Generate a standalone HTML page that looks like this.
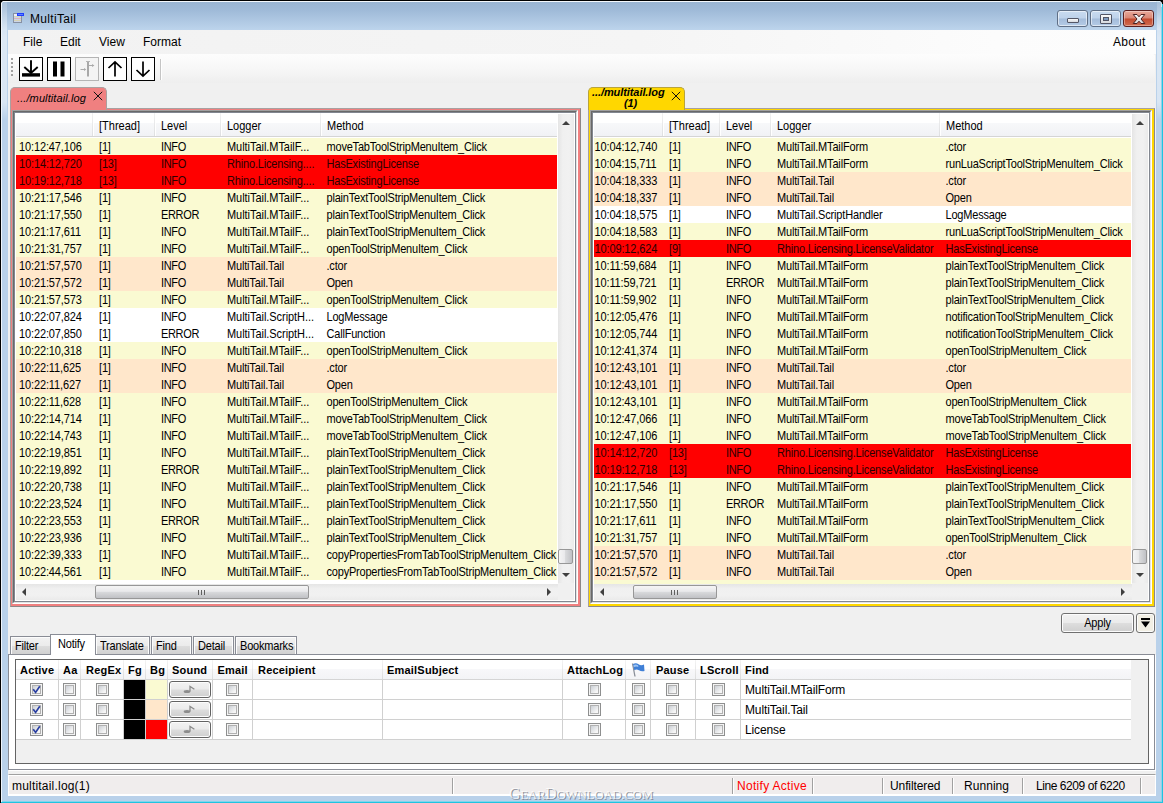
<!DOCTYPE html>
<html><head><meta charset="utf-8"><title>MultiTail</title>
<style>
*{box-sizing:border-box;margin:0;padding:0}
html,body{width:1163px;height:803px;overflow:hidden;background:#b9d1ea}
body{font-family:"Liberation Sans",sans-serif;font-size:11px;color:#000}
#win{position:relative;width:1163px;height:803px;overflow:hidden;background:#b9d1ea}
#win div,#win span,#win i,#win b,#win u{position:absolute}
/* frame */
#frame{left:0;top:0;width:1163px;height:803px;background:linear-gradient(#99b4d1 0,#9fbad8 10px,#bdd4ec 30px,#b9d1ea 31px)}
#fl{left:0;top:0;width:1px;height:803px;background:#000}
#fl2{left:1px;top:2px;width:1px;height:801px;background:#eef4fb}
#ft{left:0;top:0;width:1163px;height:1px;background:#000}
#ft2{left:2px;top:1px;width:1158px;height:1px;background:#f4f8fc}
#fr{left:1162px;top:4px;width:1px;height:799px;background:#1fc3e0}
#fr2{left:1161px;top:3px;width:1px;height:800px;background:#8fd3ea}
#fb{left:1px;top:802px;width:1162px;height:1px;background:#1fc3e0}
#fb2{left:2px;top:801px;width:1160px;height:1px;background:#7fd6ec}
#title{left:30px;top:12px;font-size:12px;line-height:15px;letter-spacing:.32px;white-space:nowrap}
/* client */
#client{left:8px;top:30px;width:1148px;height:766px;background:#f0f0f0}
#menu{left:0;top:0;width:1148px;height:24px;background:linear-gradient(to right,#f2f2f2 0,#f5f5f5 55%,#fcfcfc 86%,#fdfdfd 100%)}
#menu span{top:5px;font-size:12px;line-height:15px;white-space:nowrap}
#tool{left:0;top:24px;width:1147px;height:29px;background:linear-gradient(#fdfdfd,#f7f7f7 50%,#eeeeee);border-radius:0 2px 2px 0}
.tb{top:3px;width:24px;height:24px;border:1px solid #000;background:#fff}
.tb.dis{border-color:#b4b4b4;background:#f4f4f4}
.tb svg{position:absolute;left:0;top:0}
#grip{left:3px;top:4px;width:2px;height:20px;background:repeating-linear-gradient(#a0a0a0 0,#a0a0a0 2px,transparent 2px,transparent 4px)}
#tsep{left:152px;top:5px;width:1px;height:21px;background:#c5c5c5;box-shadow:1px 0 0 #fff}
/* file tabs */
.ftab{top:87px;height:23px;z-index:4;border:1px solid #a9a0a0;border-bottom:none;border-radius:5px 5px 0 0;font-style:italic;white-space:nowrap}
.ftab span{white-space:nowrap}
/* panes */
.pane{top:108px;height:499px;border-top:1px solid #a8a0a0;border-left:1px solid #a5a0a0;border-right:1px solid #8c8888;border-bottom:1px solid #8c8888}
.lv{left:1px;top:1px;right:2px;bottom:2px;background:#fff;border:1px solid #a0a0a0;border-right-color:#fff;border-bottom-color:#fff;overflow:hidden}
.lv:before{content:"";position:absolute;left:0;top:0;right:0;bottom:0;border:1px solid #696969;border-right-color:#e3e3e3;border-bottom-color:#e3e3e3;z-index:5;pointer-events:none}
.lv:after{content:"";position:absolute;left:1px;top:1px;right:1px;bottom:1px;border:1px solid #828790;z-index:5;pointer-events:none}
.lvh{left:3px;top:2px;right:20px;height:24px;background:linear-gradient(#fff 0,#fff 42%,#f7f8fa 43%,#f1f2f5 100%);border-bottom:1px solid #d5d5d5}
.lvh .ht{top:7px;line-height:13px;white-space:nowrap}
.lvh .hs{top:0;width:1px;height:23px;background:linear-gradient(#f2f2f2,#dedfe1);box-shadow:1px 0 0 #fff}
.r{left:3px;right:20px;height:17px}
.r span{top:3px;line-height:13px;white-space:nowrap;letter-spacing:-.17px}
.r span:nth-child(1){letter-spacing:-.12px}
.r span:nth-child(3){letter-spacing:-.35px}
.r span:nth-child(5){letter-spacing:-.2px;margin-left:-.5px}
.r.red{color:#2c0000}
.tail{left:3px;right:20px;top:469px;height:4px}
.vsb{right:3px;top:3px;width:16px;bottom:20px;background:linear-gradient(to right,#e5e5e5,#f0f0f0 30%,#f1f1f1 70%,#eaeaea)}
.hsb{left:3px;right:19px;bottom:3px;height:16px;background:linear-gradient(#e5e5e5,#f0f0f0 30%,#f1f1f1 70%,#eaeaea)}
.corner{right:3px;bottom:3px;width:16px;height:17px;background:#f0f0f0}
.au{left:4px;top:7px;border:4px solid transparent;border-top:none;border-bottom:4px solid #404040;width:0;height:0}
.ad{left:4px;bottom:6px;border:4px solid transparent;border-bottom:none;border-top:4px solid #404040;width:0;height:0}
.al{left:6px;top:4px;border:4px solid transparent;border-left:none;border-right:4px solid #404040;width:0;height:0}
.ar{right:7px;top:4px;border:4px solid transparent;border-right:none;border-left:4px solid #404040;width:0;height:0}
.vth{left:0;width:15px;top:435px;height:15px;border:1px solid #979797;border-radius:2px;background:linear-gradient(to right,#f5f5f5,#e9e9eb 45%,#d9dadc 50%,#c0c1c5)}
.hth{top:1px;height:14px;border:1px solid #979797;border-radius:2px;background:linear-gradient(#f5f5f5,#e9e9eb 45%,#d9dadc 50%,#c0c1c5)}
.hth u{left:50%;top:4px;margin-left:-4px;width:7px;height:5px;background:repeating-linear-gradient(to right,#606060 0,#606060 1px,transparent 1px,transparent 3px)}
/* apply */
.btn{border:1px solid #707070;border-radius:3px;background:linear-gradient(#f2f2f2,#ebebeb 48%,#dddddd 52%,#cfcfcf);box-shadow:inset 0 0 0 1px #fcfcfc;text-align:center}
/* bottom tabs */
.btab{top:636px;height:19px;border:1px solid #898c95;border-bottom:none;background:linear-gradient(#f2f2f2,#ebebeb 50%,#dddddd 50%,#cfcfcf);box-shadow:inset 1px 1px 0 #fcfcfc,inset -1px 0 0 #fcfcfc;line-height:13px;padding-top:3px;padding-left:4px;white-space:nowrap}
.btab.sel{top:634px;height:21px;background:#fff;z-index:3;padding-top:3px;padding-left:7px;box-shadow:none}
#tabpage{left:8px;top:654px;width:1147px;height:116px;border:1px solid #898c95;background:#fff;box-shadow:1px 1px 0 #fff}
#gridbox{left:6px;top:4px;width:1134px;height:105px;border:1px solid #646464;background:#f0f0f0}
#ghead{left:0;top:0;width:1115px;height:20px;background:linear-gradient(#fff 0,#fff 45%,#f8f8fa 46%,#f3f4f6 100%);border-bottom:1px solid #d5d5d5}
#ghead span{top:4px;font-weight:bold;line-height:13px;white-space:nowrap;letter-spacing:.2px}
#ghead i{top:0;width:1px;height:19px;background:linear-gradient(#f4f4f4,#dcdcdc)}
.grow{left:0;width:1115px;height:20px;background:#fff;border-bottom:1px solid #d0d0d0}
.grow i{top:0;width:1px;height:20px;background:#d0d0d0}
.grow span{top:4px;line-height:13px;white-space:nowrap;letter-spacing:-.13px}
.cb{top:3px;width:13px;height:13px;border:1px solid #8e8f8f;background:#f4f4f4}
.cb:before{content:"";position:absolute;left:1px;top:1px;width:7px;height:7px;border:1px solid #b1b1b1;background:linear-gradient(135deg,#cbcfd5,#f6f6f6 80%)}
.cb svg{position:absolute;left:1px;top:1px}
.snd{top:1px;left:153px;width:42px;height:17px;border-color:#626262;border-radius:3px}
/* status */
#status{left:8px;top:774px;width:1148px;height:22px;background:#f0eded;border-top:1px solid #a0a0a0;border-right:1px solid #fff;border-bottom:2px solid #fff;border-left:1px solid #fff}
#status:before{content:"";position:absolute;left:0;top:0;right:0;height:1px;background:#fff}
#status span{top:4px;font-size:12px;line-height:15px;white-space:nowrap}
#status i{top:3px;width:1px;height:16px;background:#a0a0a0;box-shadow:1px 0 0 #fff}
.cap{border:1px solid #5f6f86;border-radius:3px;background:linear-gradient(#c9dbf0 0,#bed2ea 48%,#a4bcda 52%,#b4cbe6 100%);box-shadow:inset 0 0 0 1px rgba(255,255,255,.55)}
.cap.close{border-color:#5b1f1f;background:linear-gradient(#e9a99b 0,#d98674 48%,#c34a2f 52%,#d06c4f 100%);box-shadow:inset 0 0 0 1px rgba(255,255,255,.35)}
#wm{left:509px;top:785px;font-family:"Liberation Serif",serif;font-size:16px;line-height:18px;color:rgba(255,255,255,.8);text-shadow:1px 1px 0 rgba(110,115,125,.75);letter-spacing:-.33px;white-space:nowrap;z-index:9}

#gl{left:2px;top:2px;width:5px;height:118px;background:linear-gradient(rgba(255,255,255,.15),rgba(255,255,255,.5) 30%,rgba(255,255,255,.45) 85%,rgba(255,255,255,0))}
#gr{left:1157px;top:2px;width:4px;height:118px;background:linear-gradient(rgba(255,255,255,.15),rgba(255,255,255,.5) 30%,rgba(255,255,255,.45) 85%,rgba(255,255,255,0))}
#wm s{font-size:13px;text-decoration:none}
.r span,.lvh .ht,.btab span,.btn>span{transform:scaleY(1.13);transform-origin:0 10.4px}
.btab span,.btn>span{position:static!important;display:inline-block;line-height:13px;letter-spacing:-.2px}

</style></head><body>
<div id="win">
<div id="frame"></div>
<div id="ft"></div><div id="ft2"></div><div id="fl"></div><div id="fl2"></div><div id="fr2"></div><div id="fr"></div><div id="fb2"></div><div id="fb"></div><div id="gl"></div><div id="gr"></div>
<svg style="position:absolute;left:0;top:0" width="8" height="8" viewBox="0 0 8 8"><path d="M0 0H7V1H3V2H2V3H1V7H0Z" fill="#000"/><path d="M1.5 7V3.5Q1.5 1.5 3.5 1.5H7" fill="none" stroke="#f4f8fc" stroke-width="1"/></svg>
<svg style="position:absolute;left:1155px;top:0" width="8" height="8" viewBox="0 0 8 8"><path d="M8 0H1V1H5V2H6V3H7V4H8Z" fill="#000"/><path d="M6.5 7V3.5Q6.5 1.5 4.5 1.5H1" fill="none" stroke="#d9eef7" stroke-width="1"/></svg>
<!-- app icon -->
<svg style="position:absolute;left:13px;top:13px" width="12" height="10" viewBox="0 0 12 10"><rect x=".5" y=".5" width="8" height="9" fill="#ccd5e6" stroke="#8791a2"/><rect x="1" y="1" width="3" height="2" fill="#e8ecfa"/><rect x="4" y="0" width="7" height="3" fill="#1f3fff"/><rect x="5" y="1" width="5" height="1" fill="#5f7dff"/><rect x="1" y="3" width="7" height="1" fill="#d6d6bc"/><rect x="1" y="5" width="7" height="1" fill="#dcb4bc"/><rect x="1" y="7" width="7" height="1" fill="#d6d2b4"/></svg>
<span id="title">MultiTail</span>
<!-- caption buttons -->
<div class="cap" style="left:1057px;top:10px;width:31px;height:17px"><i style="left:9px;top:7px;width:12px;height:5px;border:1px solid #535666;background:linear-gradient(#fbfbfb,#d6d9de);border-radius:1px"></i></div>
<div class="cap" style="left:1090px;top:10px;width:31px;height:17px"><i style="left:9px;top:3px;width:12px;height:10px;border:1px solid #535666;background:linear-gradient(#fbfbfb,#d6d9de);border-radius:1px"></i><i style="left:12px;top:6px;width:6px;height:4px;border:1px solid #535666;background:#7f9bc0"></i></div>
<div class="cap close" style="left:1123px;top:10px;width:31px;height:17px"><svg style="position:absolute;left:8px;top:2px" width="14" height="12" viewBox="0 0 14 12"><path d="M1.2 1.5L5 1.5L7 3.8L9 1.5L12.8 1.5L9 6L12.8 10.5L9 10.5L7 8.2L5 10.5L1.2 10.5L5 6Z" fill="url(#xg)" stroke="#4a2020" stroke-width="1" stroke-linejoin="round"/><defs><linearGradient id="xg" x1="0" y1="0" x2="0" y2="1"><stop offset="0" stop-color="#fdfdfd"/><stop offset="1" stop-color="#d4d4d8"/></linearGradient></defs></svg></div>
<div id="client">
 <div id="menu">
  <span style="left:15px">File</span><span style="left:52px">Edit</span><span style="left:91px">View</span><span style="left:135px">Format</span><span style="left:1105px;letter-spacing:.25px">About</span>
 </div>
 <div id="tool">
  <div id="grip"></div>
  <div class="tb" style="left:11px"><svg width="22" height="22" viewBox="0 0 22 22"><path d="M11 2.2V14.5M4.3 9L11 15L17.7 9" fill="none" stroke="#000" stroke-width="1.9"/><rect x="2" y="15.2" width="18" height="3.4" fill="#000"/></svg></div>
  <div class="tb" style="left:39px"><svg width="22" height="22" viewBox="0 0 22 22"><rect x="5" y="3.5" width="4" height="15" fill="#000"/><rect x="12.5" y="3.5" width="4" height="15" fill="#000"/></svg></div>
  <div class="tb dis" style="left:67px"><svg width="22" height="22" viewBox="0 0 22 22"><path d="M12 3V18.5" stroke="#9a9a9a" stroke-width="1.7" fill="none"/><path d="M10 3.5H14" stroke="#b5b5b5" stroke-width="1" fill="none"/><path d="M4.5 11.5H9M13 7.5H17.5" stroke="#aaa" stroke-width="1" fill="none"/><path d="M8 10L10.3 11.5L8 13ZM16 6L18.4 7.5L16 9Z" fill="#aaa"/></svg></div>
  <div class="tb" style="left:95px"><svg width="22" height="22" viewBox="0 0 22 22"><path d="M11 18.5V4M4.5 10L11 3.8L17.5 10" fill="none" stroke="#000" stroke-width="1.7"/></svg></div>
  <div class="tb" style="left:123px"><svg width="22" height="22" viewBox="0 0 22 22"><path d="M11 3.5V18M4.5 12L11 18.2L17.5 12" fill="none" stroke="#000" stroke-width="1.7"/></svg></div>
  <div id="tsep"></div>
 </div>
</div>
<!-- file tabs -->
<div class="ftab" style="left:10px;width:97px;background:#f08080"><span style="left:6px;top:4px;line-height:13px;letter-spacing:.1px">.../multitail.log</span>
 <svg style="position:absolute;left:82px;top:3px" width="10" height="10" viewBox="0 0 10 10"><path d="M.8.8L9.2 9.2M9.2.8L.8 9.2" stroke="#111" stroke-width="1" fill="none"/></svg></div>
<div class="ftab" style="left:588px;width:97px;background:#ffd700;font-weight:bold;border-color:#b9a43a"><span style="left:3px;top:-1px;line-height:11px;letter-spacing:-.08px;font-size:11px">.../multitail.log</span><span style="left:35px;top:10px;line-height:11px;letter-spacing:-.1px">(1)</span>
 <svg style="position:absolute;left:82px;top:3px" width="10" height="10" viewBox="0 0 10 10"><path d="M.8.8L9.2 9.2M9.2.8L.8 9.2" stroke="#111" stroke-width="1" fill="none"/></svg></div>

<div class="pane pl" style="left:10px;width:571px;background:#f08080">
<div class="lv">
<div class="lvh">
<i class="hs" style="left:76px"></i>
<span class="ht" style="left:83px">[Thread]</span>
<i class="hs" style="left:138px"></i>
<span class="ht" style="left:145px">Level</span>
<i class="hs" style="left:204px"></i>
<span class="ht" style="left:211px">Logger</span>
<i class="hs" style="left:304px"></i>
<span class="ht" style="left:311px">Method</span>
</div>
<div class="r" style="top:27px;background:#fafad2"><span style="left:3px">10:12:47,106</span><span style="left:83px">[1]</span><span style="left:145px">INFO</span><span style="left:211px;letter-spacing:-.05px">MultiTail.MTailF...</span><span style="left:311px">moveTabToolStripMenuItem_Click</span></div>
<div class="r red" style="top:44px;background:#ff0000"><span style="left:3px">10:14:12,720</span><span style="left:83px">[13]</span><span style="left:145px">INFO</span><span style="left:211px">Rhino.Licensing....</span><span style="left:311px">HasExistingLicense</span></div>
<div class="r red" style="top:61px;background:#ff0000"><span style="left:3px">10:19:12,718</span><span style="left:83px">[13]</span><span style="left:145px">INFO</span><span style="left:211px">Rhino.Licensing....</span><span style="left:311px">HasExistingLicense</span></div>
<div class="r" style="top:78px;background:#fafad2"><span style="left:3px">10:21:17,546</span><span style="left:83px">[1]</span><span style="left:145px">INFO</span><span style="left:211px;letter-spacing:-.05px">MultiTail.MTailF...</span><span style="left:311px">plainTextToolStripMenuItem_Click</span></div>
<div class="r" style="top:95px;background:#fafad2"><span style="left:3px">10:21:17,550</span><span style="left:83px">[1]</span><span style="left:145px">ERROR</span><span style="left:211px;letter-spacing:-.05px">MultiTail.MTailF...</span><span style="left:311px">plainTextToolStripMenuItem_Click</span></div>
<div class="r" style="top:112px;background:#fafad2"><span style="left:3px">10:21:17,611</span><span style="left:83px">[1]</span><span style="left:145px">INFO</span><span style="left:211px;letter-spacing:-.05px">MultiTail.MTailF...</span><span style="left:311px">plainTextToolStripMenuItem_Click</span></div>
<div class="r" style="top:129px;background:#fafad2"><span style="left:3px">10:21:31,757</span><span style="left:83px">[1]</span><span style="left:145px">INFO</span><span style="left:211px;letter-spacing:-.05px">MultiTail.MTailF...</span><span style="left:311px">openToolStripMenuItem_Click</span></div>
<div class="r" style="top:146px;background:#ffe7cb"><span style="left:3px">10:21:57,570</span><span style="left:83px">[1]</span><span style="left:145px">INFO</span><span style="left:211px">MultiTail.Tail</span><span style="left:311px">.ctor</span></div>
<div class="r" style="top:163px;background:#ffe7cb"><span style="left:3px">10:21:57,572</span><span style="left:83px">[1]</span><span style="left:145px">INFO</span><span style="left:211px">MultiTail.Tail</span><span style="left:311px">Open</span></div>
<div class="r" style="top:180px;background:#fafad2"><span style="left:3px">10:21:57,573</span><span style="left:83px">[1]</span><span style="left:145px">INFO</span><span style="left:211px;letter-spacing:-.05px">MultiTail.MTailF...</span><span style="left:311px">openToolStripMenuItem_Click</span></div>
<div class="r" style="top:197px;background:#ffffff"><span style="left:3px">10:22:07,824</span><span style="left:83px">[1]</span><span style="left:145px">INFO</span><span style="left:211px;letter-spacing:-.05px">MultiTail.ScriptH...</span><span style="left:311px">LogMessage</span></div>
<div class="r" style="top:214px;background:#ffffff"><span style="left:3px">10:22:07,850</span><span style="left:83px">[1]</span><span style="left:145px">ERROR</span><span style="left:211px;letter-spacing:-.05px">MultiTail.ScriptH...</span><span style="left:311px">CallFunction</span></div>
<div class="r" style="top:231px;background:#fafad2"><span style="left:3px">10:22:10,318</span><span style="left:83px">[1]</span><span style="left:145px">INFO</span><span style="left:211px;letter-spacing:-.05px">MultiTail.MTailF...</span><span style="left:311px">openToolStripMenuItem_Click</span></div>
<div class="r" style="top:248px;background:#ffe7cb"><span style="left:3px">10:22:11,625</span><span style="left:83px">[1]</span><span style="left:145px">INFO</span><span style="left:211px">MultiTail.Tail</span><span style="left:311px">.ctor</span></div>
<div class="r" style="top:265px;background:#ffe7cb"><span style="left:3px">10:22:11,627</span><span style="left:83px">[1]</span><span style="left:145px">INFO</span><span style="left:211px">MultiTail.Tail</span><span style="left:311px">Open</span></div>
<div class="r" style="top:282px;background:#fafad2"><span style="left:3px">10:22:11,628</span><span style="left:83px">[1]</span><span style="left:145px">INFO</span><span style="left:211px;letter-spacing:-.05px">MultiTail.MTailF...</span><span style="left:311px">openToolStripMenuItem_Click</span></div>
<div class="r" style="top:299px;background:#fafad2"><span style="left:3px">10:22:14,714</span><span style="left:83px">[1]</span><span style="left:145px">INFO</span><span style="left:211px;letter-spacing:-.05px">MultiTail.MTailF...</span><span style="left:311px">moveTabToolStripMenuItem_Click</span></div>
<div class="r" style="top:316px;background:#fafad2"><span style="left:3px">10:22:14,743</span><span style="left:83px">[1]</span><span style="left:145px">INFO</span><span style="left:211px;letter-spacing:-.05px">MultiTail.MTailF...</span><span style="left:311px">moveTabToolStripMenuItem_Click</span></div>
<div class="r" style="top:333px;background:#fafad2"><span style="left:3px">10:22:19,851</span><span style="left:83px">[1]</span><span style="left:145px">INFO</span><span style="left:211px;letter-spacing:-.05px">MultiTail.MTailF...</span><span style="left:311px">plainTextToolStripMenuItem_Click</span></div>
<div class="r" style="top:350px;background:#fafad2"><span style="left:3px">10:22:19,892</span><span style="left:83px">[1]</span><span style="left:145px">ERROR</span><span style="left:211px;letter-spacing:-.05px">MultiTail.MTailF...</span><span style="left:311px">plainTextToolStripMenuItem_Click</span></div>
<div class="r" style="top:367px;background:#fafad2"><span style="left:3px">10:22:20,738</span><span style="left:83px">[1]</span><span style="left:145px">INFO</span><span style="left:211px;letter-spacing:-.05px">MultiTail.MTailF...</span><span style="left:311px">plainTextToolStripMenuItem_Click</span></div>
<div class="r" style="top:384px;background:#fafad2"><span style="left:3px">10:22:23,524</span><span style="left:83px">[1]</span><span style="left:145px">INFO</span><span style="left:211px;letter-spacing:-.05px">MultiTail.MTailF...</span><span style="left:311px">plainTextToolStripMenuItem_Click</span></div>
<div class="r" style="top:401px;background:#fafad2"><span style="left:3px">10:22:23,553</span><span style="left:83px">[1]</span><span style="left:145px">ERROR</span><span style="left:211px;letter-spacing:-.05px">MultiTail.MTailF...</span><span style="left:311px">plainTextToolStripMenuItem_Click</span></div>
<div class="r" style="top:418px;background:#fafad2"><span style="left:3px">10:22:23,936</span><span style="left:83px">[1]</span><span style="left:145px">INFO</span><span style="left:211px;letter-spacing:-.05px">MultiTail.MTailF...</span><span style="left:311px">plainTextToolStripMenuItem_Click</span></div>
<div class="r" style="top:435px;background:#fafad2"><span style="left:3px">10:22:39,333</span><span style="left:83px">[1]</span><span style="left:145px">INFO</span><span style="left:211px;letter-spacing:-.05px">MultiTail.MTailF...</span><span style="left:311px">copyPropertiesFromTabToolStripMenuItem_Click</span></div>
<div class="r" style="top:452px;background:#fafad2"><span style="left:3px">10:22:44,561</span><span style="left:83px">[1]</span><span style="left:145px">INFO</span><span style="left:211px;letter-spacing:-.05px">MultiTail.MTailF...</span><span style="left:311px">copyPropertiesFromTabToolStripMenuItem_Click</span></div>
<div class="tail" style="background:#ffffff"></div>
<div class="vsb"><b class="au"></b><div class="vth"></div><b class="ad"></b></div>
<div class="hsb"><b class="al"></b><div class="hth" style="left:79px;width:214px"><u></u></div><b class="ar"></b></div>
<div class="corner"></div>
</div></div>
<div class="pane pr" style="left:588px;width:567px;background:#ffd700">
<div class="lv">
<div class="lvh">
<i class="hs" style="left:68px"></i>
<span class="ht" style="left:75px">[Thread]</span>
<i class="hs" style="left:125px"></i>
<span class="ht" style="left:132px">Level</span>
<i class="hs" style="left:176px"></i>
<span class="ht" style="left:183px">Logger</span>
<i class="hs" style="left:345px"></i>
<span class="ht" style="left:352px">Method</span>
</div>
<div class="r" style="top:27px;background:#fafad2"><span style="left:0.5px">10:04:12,740</span><span style="left:75px">[1]</span><span style="left:132px">INFO</span><span style="left:183px">MultiTail.MTailForm</span><span style="left:352px">.ctor</span></div>
<div class="r" style="top:44px;background:#fafad2"><span style="left:0.5px">10:04:15,711</span><span style="left:75px">[1]</span><span style="left:132px">INFO</span><span style="left:183px">MultiTail.MTailForm</span><span style="left:352px">runLuaScriptToolStripMenuItem_Click</span></div>
<div class="r" style="top:61px;background:#ffe7cb"><span style="left:0.5px">10:04:18,333</span><span style="left:75px">[1]</span><span style="left:132px">INFO</span><span style="left:183px">MultiTail.Tail</span><span style="left:352px">.ctor</span></div>
<div class="r" style="top:78px;background:#ffe7cb"><span style="left:0.5px">10:04:18,337</span><span style="left:75px">[1]</span><span style="left:132px">INFO</span><span style="left:183px">MultiTail.Tail</span><span style="left:352px">Open</span></div>
<div class="r" style="top:95px;background:#ffffff"><span style="left:0.5px">10:04:18,575</span><span style="left:75px">[1]</span><span style="left:132px">INFO</span><span style="left:183px">MultiTail.ScriptHandler</span><span style="left:352px">LogMessage</span></div>
<div class="r" style="top:112px;background:#fafad2"><span style="left:0.5px">10:04:18,583</span><span style="left:75px">[1]</span><span style="left:132px">INFO</span><span style="left:183px">MultiTail.MTailForm</span><span style="left:352px">runLuaScriptToolStripMenuItem_Click</span></div>
<div class="r red" style="top:129px;background:#ff0000"><span style="left:0.5px">10:09:12,624</span><span style="left:75px">[9]</span><span style="left:132px">INFO</span><span style="left:183px">Rhino.Licensing.LicenseValidator</span><span style="left:352px">HasExistingLicense</span></div>
<div class="r" style="top:146px;background:#fafad2"><span style="left:0.5px">10:11:59,684</span><span style="left:75px">[1]</span><span style="left:132px">INFO</span><span style="left:183px">MultiTail.MTailForm</span><span style="left:352px">plainTextToolStripMenuItem_Click</span></div>
<div class="r" style="top:163px;background:#fafad2"><span style="left:0.5px">10:11:59,721</span><span style="left:75px">[1]</span><span style="left:132px">ERROR</span><span style="left:183px">MultiTail.MTailForm</span><span style="left:352px">plainTextToolStripMenuItem_Click</span></div>
<div class="r" style="top:180px;background:#fafad2"><span style="left:0.5px">10:11:59,902</span><span style="left:75px">[1]</span><span style="left:132px">INFO</span><span style="left:183px">MultiTail.MTailForm</span><span style="left:352px">plainTextToolStripMenuItem_Click</span></div>
<div class="r" style="top:197px;background:#fafad2"><span style="left:0.5px">10:12:05,476</span><span style="left:75px">[1]</span><span style="left:132px">INFO</span><span style="left:183px">MultiTail.MTailForm</span><span style="left:352px">notificationToolStripMenuItem_Click</span></div>
<div class="r" style="top:214px;background:#fafad2"><span style="left:0.5px">10:12:05,744</span><span style="left:75px">[1]</span><span style="left:132px">INFO</span><span style="left:183px">MultiTail.MTailForm</span><span style="left:352px">notificationToolStripMenuItem_Click</span></div>
<div class="r" style="top:231px;background:#fafad2"><span style="left:0.5px">10:12:41,374</span><span style="left:75px">[1]</span><span style="left:132px">INFO</span><span style="left:183px">MultiTail.MTailForm</span><span style="left:352px">openToolStripMenuItem_Click</span></div>
<div class="r" style="top:248px;background:#ffe7cb"><span style="left:0.5px">10:12:43,101</span><span style="left:75px">[1]</span><span style="left:132px">INFO</span><span style="left:183px">MultiTail.Tail</span><span style="left:352px">.ctor</span></div>
<div class="r" style="top:265px;background:#ffe7cb"><span style="left:0.5px">10:12:43,101</span><span style="left:75px">[1]</span><span style="left:132px">INFO</span><span style="left:183px">MultiTail.Tail</span><span style="left:352px">Open</span></div>
<div class="r" style="top:282px;background:#fafad2"><span style="left:0.5px">10:12:43,101</span><span style="left:75px">[1]</span><span style="left:132px">INFO</span><span style="left:183px">MultiTail.MTailForm</span><span style="left:352px">openToolStripMenuItem_Click</span></div>
<div class="r" style="top:299px;background:#fafad2"><span style="left:0.5px">10:12:47,066</span><span style="left:75px">[1]</span><span style="left:132px">INFO</span><span style="left:183px">MultiTail.MTailForm</span><span style="left:352px">moveTabToolStripMenuItem_Click</span></div>
<div class="r" style="top:316px;background:#fafad2"><span style="left:0.5px">10:12:47,106</span><span style="left:75px">[1]</span><span style="left:132px">INFO</span><span style="left:183px">MultiTail.MTailForm</span><span style="left:352px">moveTabToolStripMenuItem_Click</span></div>
<div class="r red" style="top:333px;background:#ff0000"><span style="left:0.5px">10:14:12,720</span><span style="left:75px">[13]</span><span style="left:132px">INFO</span><span style="left:183px">Rhino.Licensing.LicenseValidator</span><span style="left:352px">HasExistingLicense</span></div>
<div class="r red" style="top:350px;background:#ff0000"><span style="left:0.5px">10:19:12,718</span><span style="left:75px">[13]</span><span style="left:132px">INFO</span><span style="left:183px">Rhino.Licensing.LicenseValidator</span><span style="left:352px">HasExistingLicense</span></div>
<div class="r" style="top:367px;background:#fafad2"><span style="left:0.5px">10:21:17,546</span><span style="left:75px">[1]</span><span style="left:132px">INFO</span><span style="left:183px">MultiTail.MTailForm</span><span style="left:352px">plainTextToolStripMenuItem_Click</span></div>
<div class="r" style="top:384px;background:#fafad2"><span style="left:0.5px">10:21:17,550</span><span style="left:75px">[1]</span><span style="left:132px">ERROR</span><span style="left:183px">MultiTail.MTailForm</span><span style="left:352px">plainTextToolStripMenuItem_Click</span></div>
<div class="r" style="top:401px;background:#fafad2"><span style="left:0.5px">10:21:17,611</span><span style="left:75px">[1]</span><span style="left:132px">INFO</span><span style="left:183px">MultiTail.MTailForm</span><span style="left:352px">plainTextToolStripMenuItem_Click</span></div>
<div class="r" style="top:418px;background:#fafad2"><span style="left:0.5px">10:21:31,757</span><span style="left:75px">[1]</span><span style="left:132px">INFO</span><span style="left:183px">MultiTail.MTailForm</span><span style="left:352px">openToolStripMenuItem_Click</span></div>
<div class="r" style="top:435px;background:#ffe7cb"><span style="left:0.5px">10:21:57,570</span><span style="left:75px">[1]</span><span style="left:132px">INFO</span><span style="left:183px">MultiTail.Tail</span><span style="left:352px">.ctor</span></div>
<div class="r" style="top:452px;background:#ffe7cb"><span style="left:0.5px">10:21:57,572</span><span style="left:75px">[1]</span><span style="left:132px">INFO</span><span style="left:183px">MultiTail.Tail</span><span style="left:352px">Open</span></div>
<div class="tail" style="background:#fafad2"></div>
<div class="vsb"><b class="au"></b><div class="vth"></div><b class="ad"></b></div>
<div class="hsb"><b class="al"></b><div class="hth" style="left:39px;width:84px"><u></u></div><b class="ar"></b></div>
<div class="corner"></div>
</div></div>
<div class="btn" style="left:1061px;top:613px;width:73px;height:20px;line-height:13px;padding-top:3px"><span>Apply</span></div>
<div class="btn" style="left:1136px;top:613px;width:19px;height:20px;background:#f2efe4"><svg style="position:absolute;left:3px;top:4px" width="11" height="11" viewBox="0 0 11 11"><rect x="1" y="0" width="9" height="2" fill="#000"/><path d="M1 3.5H10L5.5 9.5Z" fill="#000"/></svg></div>
<div class="btab" style="left:10px;width:42px"><span>Filter</span></div>
<div class="btab" style="left:95px;width:55px"><span>Translate</span></div>
<div class="btab" style="left:151px;width:41px"><span>Find</span></div>
<div class="btab" style="left:193px;width:41px"><span>Detail</span></div>
<div class="btab" style="left:235px;width:62px"><span>Bookmarks</span></div>
<div class="btab sel" style="left:50px;width:46px"><span>Notify</span></div>
<div id="tabpage"><div id="gridbox">
<div id="ghead">
<span style="left:4px">Active</span>
<span style="left:47px">Aa</span>
<span style="left:70px">RegEx</span>
<span style="left:112px">Fg</span>
<span style="left:134px">Bg</span>
<span style="left:156px">Sound</span>
<span style="left:201.5px">Email</span>
<span style="left:242px">Receipient</span>
<span style="left:371px">EmailSubject</span>
<span style="left:551px">AttachLog</span>
<span style="left:640px">Pause</span>
<span style="left:684px">LScroll</span>
<span style="left:729px">Find</span>
<i style="left:42px"></i>
<i style="left:64px"></i>
<i style="left:107px"></i>
<i style="left:129px"></i>
<i style="left:151px"></i>
<i style="left:196px"></i>
<i style="left:236px"></i>
<i style="left:366px"></i>
<i style="left:546px"></i>
<i style="left:609px"></i>
<i style="left:634px"></i>
<i style="left:679px"></i>
<i style="left:724px"></i>
<svg style="position:absolute;left:614px;top:2px" width="16" height="16" viewBox="0 0 16 16"><path d="M2.5 1.5L5 14.5" stroke="#8a8f98" stroke-width="1.3" fill="none"/><path d="M3 2Q6 .5 8.5 2.2T14 2.5L14.5 9Q11.5 10 9 8.3T4.3 8.3Z" fill="#3f7fd6"/><path d="M3.6 3Q6 2 8 3.2L8.4 5Q6.5 4 4 5Z" fill="#9cc3f2"/></svg>
</div>
<div class="grow" style="top:20px">
<i style="left:42px"></i>
<i style="left:64px"></i>
<i style="left:107px"></i>
<i style="left:129px"></i>
<i style="left:151px"></i>
<i style="left:196px"></i>
<i style="left:236px"></i>
<i style="left:366px"></i>
<i style="left:546px"></i>
<i style="left:609px"></i>
<i style="left:634px"></i>
<i style="left:679px"></i>
<i style="left:724px"></i>
<div style="left:108px;top:0;width:21px;height:19px;background:#000"></div>
<div style="left:130px;top:0;width:21px;height:19px;background:#fafad2"></div>
<div class="btn snd"><svg style="position:absolute;left:13px;top:2px" width="16" height="11" viewBox="0 0 16 11"><ellipse cx="4" cy="7.6" rx="3.3" ry="1.5" fill="#8c8c8c"/><path d="M7 7.6V2.4L11.4 5.2" fill="none" stroke="#8c8c8c" stroke-width="1.3"/></svg></div>
<div class="cb" style="left:14px"><svg width="9" height="9" viewBox="0 0 9 9"><path d="M1.2 4.2L3.6 7.4L7.8 1.2" fill="none" stroke="#2a3fa0" stroke-width="1.7"/></svg></div>
<div class="cb" style="left:47px"></div>
<div class="cb" style="left:80px"></div>
<div class="cb" style="left:210px"></div>
<div class="cb" style="left:572px"></div>
<div class="cb" style="left:616px"></div>
<div class="cb" style="left:650px"></div>
<div class="cb" style="left:696px"></div>
<span style="left:729px;font-size:12px">MultiTail.MTailForm</span>
</div>
<div class="grow" style="top:40px">
<i style="left:42px"></i>
<i style="left:64px"></i>
<i style="left:107px"></i>
<i style="left:129px"></i>
<i style="left:151px"></i>
<i style="left:196px"></i>
<i style="left:236px"></i>
<i style="left:366px"></i>
<i style="left:546px"></i>
<i style="left:609px"></i>
<i style="left:634px"></i>
<i style="left:679px"></i>
<i style="left:724px"></i>
<div style="left:108px;top:0;width:21px;height:19px;background:#000"></div>
<div style="left:130px;top:0;width:21px;height:19px;background:#ffe7cb"></div>
<div class="btn snd"><svg style="position:absolute;left:13px;top:2px" width="16" height="11" viewBox="0 0 16 11"><ellipse cx="4" cy="7.6" rx="3.3" ry="1.5" fill="#8c8c8c"/><path d="M7 7.6V2.4L11.4 5.2" fill="none" stroke="#8c8c8c" stroke-width="1.3"/></svg></div>
<div class="cb" style="left:14px"><svg width="9" height="9" viewBox="0 0 9 9"><path d="M1.2 4.2L3.6 7.4L7.8 1.2" fill="none" stroke="#2a3fa0" stroke-width="1.7"/></svg></div>
<div class="cb" style="left:47px"></div>
<div class="cb" style="left:80px"></div>
<div class="cb" style="left:210px"></div>
<div class="cb" style="left:572px"></div>
<div class="cb" style="left:616px"></div>
<div class="cb" style="left:650px"></div>
<div class="cb" style="left:696px"></div>
<span style="left:729px;font-size:12px">MultiTail.Tail</span>
</div>
<div class="grow" style="top:60px">
<i style="left:42px"></i>
<i style="left:64px"></i>
<i style="left:107px"></i>
<i style="left:129px"></i>
<i style="left:151px"></i>
<i style="left:196px"></i>
<i style="left:236px"></i>
<i style="left:366px"></i>
<i style="left:546px"></i>
<i style="left:609px"></i>
<i style="left:634px"></i>
<i style="left:679px"></i>
<i style="left:724px"></i>
<div style="left:108px;top:0;width:21px;height:19px;background:#000"></div>
<div style="left:130px;top:0;width:21px;height:19px;background:#ff0000"></div>
<div class="btn snd"><svg style="position:absolute;left:13px;top:2px" width="16" height="11" viewBox="0 0 16 11"><ellipse cx="4" cy="7.6" rx="3.3" ry="1.5" fill="#8c8c8c"/><path d="M7 7.6V2.4L11.4 5.2" fill="none" stroke="#8c8c8c" stroke-width="1.3"/></svg></div>
<div class="cb" style="left:14px"><svg width="9" height="9" viewBox="0 0 9 9"><path d="M1.2 4.2L3.6 7.4L7.8 1.2" fill="none" stroke="#2a3fa0" stroke-width="1.7"/></svg></div>
<div class="cb" style="left:47px"></div>
<div class="cb" style="left:80px"></div>
<div class="cb" style="left:210px"></div>
<div class="cb" style="left:572px"></div>
<div class="cb" style="left:616px"></div>
<div class="cb" style="left:650px"></div>
<div class="cb" style="left:696px"></div>
<span style="left:729px;font-size:12px">License</span>
</div>
</div></div>
<div id="status">
<span style="left:3px;color:#000;letter-spacing:0.2px">multitail.log(1)</span>
<span style="left:728px;color:#ff0000;letter-spacing:0.3px">Notify Active</span>
<span style="left:881px;color:#000;letter-spacing:-0.1px">Unfiltered</span>
<span style="left:955px;color:#000;letter-spacing:0.05px">Running</span>
<span style="left:1027px;color:#000;letter-spacing:-0.43px">Line 6209 of 6220</span>
<i style="left:443px"></i>
<i style="left:723px"></i>
<i style="left:803px"></i>
<i style="left:873px"></i>
<i style="left:943px"></i>
<i style="left:1013px"></i>
<i style="left:1131px"></i>
</div>
<span id="wm">G<s>EAR</s>D<s>OWNLOAD.COM</s></span>
</div>
</body></html>
